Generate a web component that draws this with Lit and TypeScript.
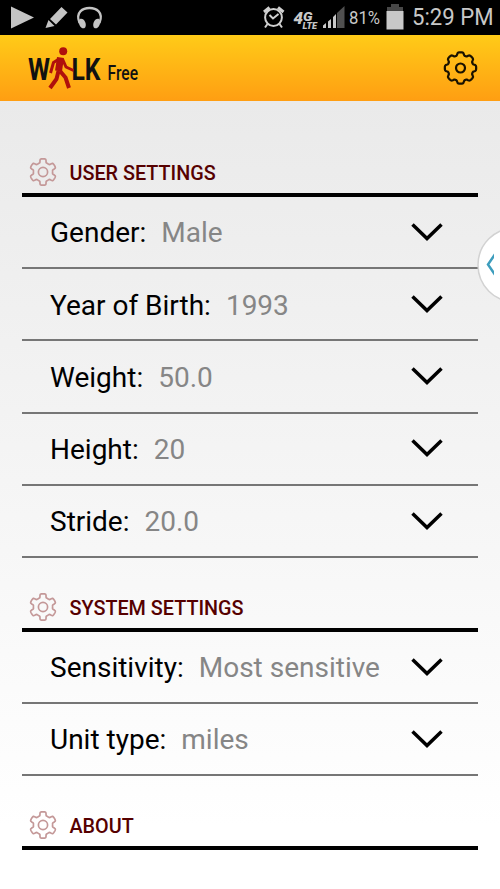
import { LitElement, html, css } from "lit";
import { customElement, property } from "lit/decorators.js";

/** Closed toothed outline around the origin, with one tooth pointing up. */
function gearPath(teeth: number, outer: number, inner: number, sharpness: number, bias: number): string {
  const steps = teeth * 24;
  const points: string[] = [];
  for (let i = 0; i < steps; i++) {
    const a = (i / steps) * Math.PI * 2;
    const wave = Math.tanh(sharpness * (Math.cos(teeth * a) + bias));
    const r = (outer + inner) / 2 + ((outer - inner) / 2) * wave;
    points.push(`${(r * Math.sin(a)).toFixed(2)},${(-r * Math.cos(a)).toFixed(2)}`);
  }
  return `M${points.join("L")}Z`;
}

const HEADER_GEAR = gearPath(8, 15.7, 12.7, 2, 0.3);
const SECTION_GEAR = gearPath(6, 13.2, 9.6, 3.6, 0.05);

@customElement("status-bar")
class StatusBar extends LitElement {
  static styles = css`
    :host { display: block; height: 35px; background: #000; }
    svg { display: block; }
    text { font-family: Roboto, sans-serif; fill: #c8c8c8; }
    .net { font-weight: 900; font-style: italic; }
  `;
  render() {
    return html`<svg width="500" height="35" viewBox="0 0 500 35">
      <g fill="#c4c4c4">
        <path d="M11 6.500L34 17.500L11 28.500Z" />
        <path d="M50 19L61.500 7L67.500 12.500L56 24.500ZM48.500 20L54.500 26L45.500 28Z" />
        <path d="M79.500 23C75 12 83 8 89.500 8C96 8 104 12 99.500 23" fill="none" stroke="#c4c4c4" stroke-width="2.300" />
        <ellipse cx="82.300" cy="23.500" rx="3.200" ry="5" transform="rotate(-22 82.300 23.500)" />
        <ellipse cx="96.700" cy="23.500" rx="3.200" ry="5" transform="rotate(22 96.700 23.500)" />
      </g>
      <g fill="none" stroke="#d0d0d0" stroke-width="2">
        <circle cx="273.500" cy="17.500" r="8.400" />
        <path d="M264 12L269.500 7.500M283.500 12L278 7.500" stroke-width="3" />
        <path d="M267.500 24L265 27.500M279.500 24L282 27.500M269.500 15L273 18.500L278.500 14" />
      </g>
      <text class="net" x="293.500" y="24" font-size="17" textLength="9.500" lengthAdjust="spacingAndGlyphs">4</text>
      <text class="net" x="303" y="20.500" font-size="12" textLength="9.500" lengthAdjust="spacingAndGlyphs">G</text>
      <text class="net" x="302.500" y="28.500" font-size="8.500" textLength="14.500" lengthAdjust="spacingAndGlyphs">LTE</text>
      <path d="M337 13L344.500 6V28H337Z" fill="#505050" />
      <path d="M323 28V25.500L326 23V28ZM328 28V21.500L331 19V28ZM333 28V17L336 14V28Z" fill="#c8c8c8" />
      <text x="349" y="24" font-size="17.500" textLength="31" lengthAdjust="spacingAndGlyphs">81%</text>
      <path d="M387 7H391V4H399V7H403V11H387Z" fill="#484848" />
      <path d="M386.500 11H403.500V29.500H386.500Z" fill="#c8c8c8" />
      <text x="412" y="25" font-size="23" textLength="81.500" lengthAdjust="spacingAndGlyphs">5:29 PM</text>
    </svg>`;
  }
}

@customElement("title-bar")
class TitleBar extends LitElement {
  static styles = css`
    :host {
      display: flex; justify-content: space-between; height: 66px; box-sizing: border-box;
      padding: 0 22px 0 28px; background: linear-gradient(#ffcb18, #ff9e12);
    }
    svg { display: block; overflow: visible; }
    text { font-family: Roboto, sans-serif; fill: #111; }
    .walk { font-weight: 700; }
    .free { font-weight: 500; }
  `;
  render() {
    return html`<svg width="140" height="66" viewBox="28 35 140 66">
        <text class="walk" x="28" y="80" font-size="32" textLength="22" lengthAdjust="spacingAndGlyphs">W</text>
        <text class="walk" x="71.500" y="80" font-size="32" textLength="29" lengthAdjust="spacingAndGlyphs">LK</text>
        <text class="free" x="107.500" y="80" font-size="20" textLength="30.500" lengthAdjust="spacingAndGlyphs">Free</text>
        <circle cx="63.200" cy="51.300" r="4" fill="#b0100c" />
        <g fill="none" stroke="#b0100c" stroke-linejoin="round">
          <path d="M59 59L53.500 62.500L50.500 73M62.500 59L66 67L73.500 70.500" stroke-width="3" />
          <path d="M60.500 57.500L58.500 71" stroke-width="7" />
          <path d="M58.500 71L56.500 79L50 88M60 71L65.500 77.500L69 88" stroke-width="4" />
        </g>
      </svg>
      <svg width="35" height="66" viewBox="443.500 35 35 66">
        <g transform="translate(461 68)" fill="none" stroke="#1a1200" stroke-width="2.200">
          <path d=${HEADER_GEAR} stroke-linejoin="round" /><circle r="4.500" />
        </g>
      </svg>`;
  }
}

@customElement("setting-row")
class SettingRow extends LitElement {
  @property() label = "";
  @property() value = "";
  static styles = css`
    :host {
      display: flex; align-items: center; height: 72.2px; box-sizing: border-box;
      border-bottom: 2px solid #767676; padding: 1.5px 35px 0 28px;
      font: 28px Roboto, sans-serif; color: #000; white-space: nowrap;
    }
    .value { color: #868686; margin-left: 15px; flex: 1; }
    svg { display: block; }
  `;
  render() {
    return html`<span>${this.label}:</span><span class="value">${this.value}</span>
      <svg width="32" height="20" viewBox="0 0 32 20">
        <path d="M1.500 1.500L16 15.500L30.500 1.500" fill="none" stroke="#000" stroke-width="3.500" />
      </svg>`;
  }
}

@customElement("section-heading")
class SectionHeading extends LitElement {
  @property() label = "";
  static styles = css`
    :host {
      display: flex; align-items: flex-end; gap: 13px; height: 74px; box-sizing: border-box;
      border-bottom: 4px solid #000; padding: 0 0 7px 6.5px;
    }
    svg { display: block; }
    span {
      font: 500 19.8px/28px Roboto, sans-serif; height: 26px;
      color: #560000; white-space: nowrap;
    }
  `;
  render() {
    return html`<svg width="28" height="28" viewBox="-14 -14 28 28">
        <g fill="none" stroke="#c49898" stroke-width="1.700">
          <path d=${SECTION_GEAR} stroke-linejoin="round" /><circle r="4.600" />
        </g>
      </svg><span>${this.label}</span>`;
  }
}

const SECTIONS: { title: string; rows: [string, string][] }[] = [
  {
    title: "USER SETTINGS",
    rows: [["Gender", "Male"], ["Year of Birth", "1993"], ["Weight", "50.0"], ["Height", "20"], ["Stride", "20.0"]],
  },
  { title: "SYSTEM SETTINGS", rows: [["Sensitivity", "Most sensitive"], ["Unit type", "miles"]] },
  { title: "ABOUT", rows: [] },
];

@customElement("app-root")
class AppRoot extends LitElement {
  static styles = css`
    :host { display: flex; flex-direction: column; position: relative; width: 500px; height: 889px; overflow: hidden; }
    main { flex: 1; padding: 22px 22px 0; background: linear-gradient(#eaeaea, #fff 92%); }
    .handle { position: absolute; right: 0; top: 228px; }
  `;
  render() {
    return html`<status-bar></status-bar><title-bar></title-bar>
      <main>
        ${SECTIONS.map((s) => html`<section-heading .label=${s.title}></section-heading>
          ${s.rows.map(([label, value]) => html`<setting-row .label=${label} .value=${value}></setting-row>`)}`)}
      </main>
      <svg class="handle" width="24" height="76" viewBox="476 228 24 76">
        <circle cx="515" cy="265" r="37" fill="#fff" stroke="#d2d2d2" stroke-width="1.500" />
        <path d="M494 253.500V258L489.500 264.500L494 271V275.500L486.500 264.500Z" fill="#3d9dbd" />
      </svg>`;
  }
}
